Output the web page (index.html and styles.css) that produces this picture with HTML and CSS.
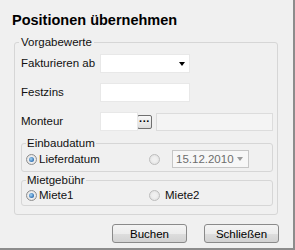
FILE: index.html
```html
<!DOCTYPE html>
<html lang="de">
<head>
  <meta charset="UTF-8" />
  <meta name="viewport" content="width=device-width, initial-scale=1.0"/>
  <title>Positionen übernehmen</title>
  <link rel="stylesheet" href="styles.css">
</head>
<body>
  <div class="dialog">
    <h1 class="title">Positionen übernehmen</h1>

    <fieldset class="group outer">
      <legend>Vorgabewerte</legend>

      <div class="form">
        <label>Fakturieren ab</label>
        <div class="select"><span class="caret"></span></div>

        <label>Festzins</label>
        <div class="field"></div>

        <label>Monteur</label>
        <div class="picker">
          <div class="field short"></div>
          <button class="dots">&middot;&middot;&middot;</button>
          <div class="field disabled"></div>
        </div>
      </div>

      <fieldset class="group inner">
        <legend>Einbaudatum</legend>
        <div class="options">
          <span class="option"><span class="radio on"></span>Lieferdatum</span>
          <span class="option">
            <span class="radio off"></span>
            <span class="combo">15.12.2010<span class="caret grey"></span></span>
          </span>
        </div>
      </fieldset>

      <fieldset class="group inner rent">
        <legend>Mietgebühr</legend>
        <div class="options">
          <span class="option"><span class="radio on"></span>Miete1</span>
          <span class="option"><span class="radio off"></span>Miete2</span>
        </div>
      </fieldset>
    </fieldset>

    <div class="actions">
      <button class="btn">Buchen</button>
      <button class="btn">Schließen</button>
    </div>
  </div>
</body>
</html>
```

FILE: styles.css
```css
body {
  margin: 0;
  font-family: "Liberation Sans", Arial, sans-serif;
  font-size: 11.5px;
  color: #111;
  background: #f0f0f0;
}
.dialog {
  width: 281px;
  height: 236px;
  padding: 12px 0 0 12px;
  border-right: 2px solid #8c8c8c;
  border-bottom: 2px solid #8c8c8c;
  background: #f0f0f0;
}
.title {
  margin: 0;
  font-size: 14.5px;
  line-height: 17px;
  font-weight: bold;
  color: #000;
}
.group {
  margin: 0;
  padding: 0;
  border: 1px solid #d6d6d6;
  border-radius: 3px;
  min-inline-size: 0;
  box-sizing: border-box;
}
.group legend {
  padding: 0 2px;
  line-height: 14px;
}
.outer {
  width: 264px;
  margin: 6px 0 0 2px;
  padding: 0 4px 8px 4px;
}
.form {
  display: grid;
  grid-template-columns: 79px 1fr;
  row-gap: 10px;
  align-items: center;
  margin: 5px 0 0 2px;
}
.form label {
  line-height: 19px;
}
.field,
.select {
  height: 19px;
  width: 90px;
  background: #fff;
  border: 1px solid #e8e8e8;
  box-sizing: border-box;
  position: relative;
}
.caret {
  position: absolute;
  right: 4px;
  top: 7px;
  width: 0;
  height: 0;
  border-left: 3.5px solid transparent;
  border-right: 3.5px solid transparent;
  border-top: 4px solid #000;
}
.caret.grey {
  border-top-color: #9a9a9a;
  right: 5px;
  top: 6px;
}
.picker {
  display: flex;
  align-items: center;
}
.field.short {
  width: 38px;
}
.dots {
  width: 15px;
  height: 14px;
  margin-left: -1px;
  padding: 0;
  border: 1px solid #6f6f6f;
  border-radius: 2px;
  background: linear-gradient(#f8f8f8, #dcdcdc);
  font-family: "Liberation Sans", Arial, sans-serif;
  font-size: 11px;
  font-weight: bold;
  line-height: 9px;
  color: #000;
}
.field.disabled {
  flex: 1;
  height: 18px;
  margin-left: 4px;
  background: #f4f4f4;
  border-color: #dcdcdc;
}
.inner {
  margin: 5px 0 0 2px;
  padding: 0 4px 3px 4px;
}
.inner legend {
  padding: 0 1px;
}
.rent {
  margin-top: 1px;
  padding-bottom: 2px;
}
.options {
  display: grid;
  grid-template-columns: 123px 1fr;
  align-items: center;
  height: 18px;
}
.rent .options {
  height: 16px;
}
.option {
  display: flex;
  align-items: center;
  gap: 2px;
}
.radio {
  width: 11px;
  height: 11px;
  border-radius: 50%;
  border: 1px solid #8e8e8e;
  background: radial-gradient(circle, #f6f6f6 30%, #d6d6d6 100%);
  box-sizing: border-box;
  position: relative;
  flex: none;
}
.radio.on::after {
  content: "";
  position: absolute;
  left: 2px;
  top: 2px;
  width: 5px;
  height: 5px;
  border-radius: 50%;
  background: radial-gradient(circle at 40% 40%, #a6d8f8, #1f5fa6 80%);
}
.radio.off {
  border-color: #bdbdbd;
  background: radial-gradient(circle, #f0f0f0 30%, #dddddd 100%);
  margin-right: 3px;
}
.combo {
  position: relative;
  width: 77px;
  height: 18px;
  margin-left: 7px;
  padding-left: 3px;
  line-height: 16px;
  font-size: 11.5px;
  color: #6d6d6d;
  background: #f7f7f7;
  border: 1px solid #c6c6c6;
  box-sizing: border-box;
}
.actions {
  display: flex;
  justify-content: flex-end;
  gap: 17px;
  margin: 9px 14px 0 0;
}
.btn {
  width: 75px;
  height: 19px;
  padding: 0;
  border: 1px solid #8a8a8a;
  border-radius: 3px;
  background: linear-gradient(#f4f4f4 0%, #ececec 50%, #dedede 50%, #d2d2d2 100%);
  font-family: "Liberation Sans", Arial, sans-serif;
  font-size: 11.5px;
  color: #000;
}
```
